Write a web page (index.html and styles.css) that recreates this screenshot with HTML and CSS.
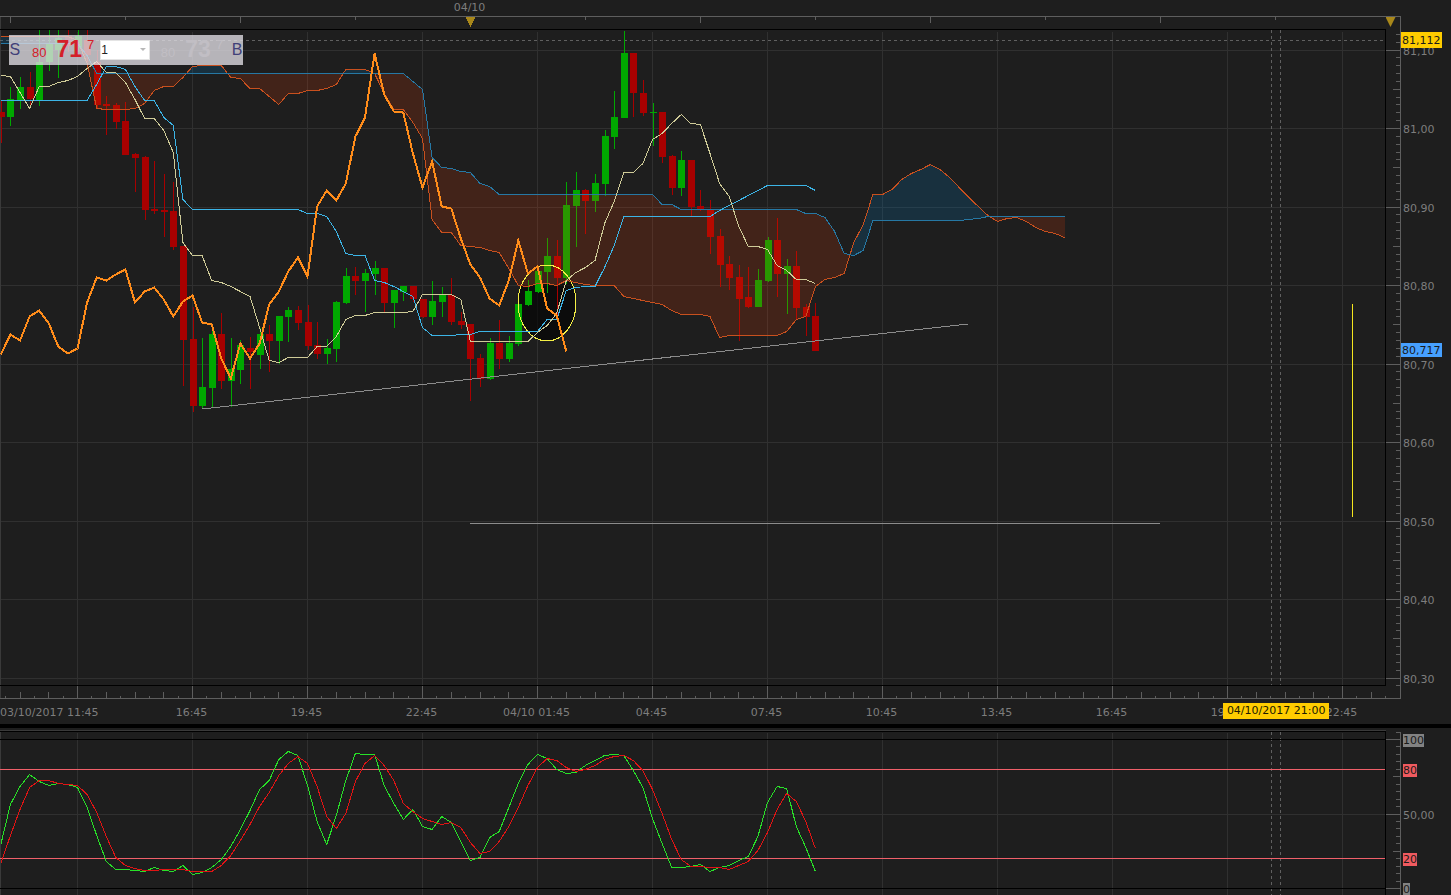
FILE: index.html
```
<!DOCTYPE html>
<html lang="en">
<head>
  <meta charset="UTF-8">
  <meta name="viewport" content="width=device-width, initial-scale=1.0">
  <title>Chart</title>
  <link rel="stylesheet" href="styles.css">
</head>
<body>
  <main class="terminal">
    <div class="date-row"><span class="date-label">04/10</span></div>

    <section class="pane price-pane">
      <svg id="price-plot" class="plot" viewBox="0 16 1386 683" preserveAspectRatio="none" role="img" aria-label="Price chart"></svg>
      <svg id="price-axis" class="axis" viewBox="1386 16 65 683" preserveAspectRatio="none"></svg>

      <form class="deal-box">
        <button type="button" class="side">S</button>
        <span class="quote sell"><small>80</small><b>71</b><sup>7</sup></span>
        <select class="amount" aria-label="Amount">
          <option>1</option>
        </select>
        <svg class="arrow" viewBox="0 0 6 4"><path d="M0 0h6L3 3z"/></svg>
        <span class="quote buy"><small>80</small><b>73</b><sup>7</sup></span>
        <button type="button" class="side">B</button>
      </form>
    </section>

    <div class="time-row">
      <span class="first">03/10/2017 11:45</span>
      <span>16:45</span>
      <span>19:45</span>
      <span>22:45</span>
      <span>04/10 01:45</span>
      <span>04:45</span>
      <span>07:45</span>
      <span>10:45</span>
      <span>13:45</span>
      <span>16:45</span>
      <span>19:45</span>
      <span>22:45</span>
      <span class="time-flag">04/10/2017 21:00</span>
    </div>

    <div class="splitter"></div>

    <section class="pane">
      <svg id="osc-plot" class="plot" viewBox="0 728 1386 167" preserveAspectRatio="none" role="img" aria-label="Stochastic oscillator"></svg>
      <svg id="osc-axis" class="axis" viewBox="1386 728 65 167" preserveAspectRatio="none"></svg>
    </section>
  </main>
  <script src="chart.js"></script>
</body>
</html>
```

FILE: styles.css
```
* {
  box-sizing: border-box;
}

body {
  margin: 0;
  background: #1e1e1e;
  color: #7d7d7d;
  font-family: "DejaVu Sans", Verdana, sans-serif;
  font-size: 11px;
  overflow: hidden;
}

.terminal {
  display: grid;
  grid-template-rows: 16px 683fr 25px 4px 167fr;
  height: 100vh;
}

.date-row {
  display: grid;
  grid-template-columns: 412fr 115fr 924fr;
  line-height: 15px;
}

.date-label {
  grid-column: 2;
  text-align: center;
}

.pane {
  position: relative;
  display: grid;
  grid-template-columns: 1fr 65px;
  min-height: 0;
}

.plot,
.axis {
  display: block;
  width: 100%;
  height: 100%;
  min-height: 0;
}

.time-row {
  position: relative;
  display: grid;
  grid-template-columns: 134fr repeat(11, 115fr) 52fr;
  line-height: 28px;
  text-align: center;
  white-space: nowrap;
}

.time-row .first {
  text-align: left;
}

.time-flag {
  position: absolute;
  left: 84.3%;
  top: 4px;
  width: 106px;
  background: #ffcc00;
  color: #201a00;
  line-height: 16px;
}

.splitter {
  background: #000;
}

/* chart drawing */
.plot path,
.plot line,
.axis line {
  fill: none;
  shape-rendering: crispEdges;
}

.plot rect,
.axis rect {
  shape-rendering: crispEdges;
}

.grid { stroke: #303030; }
.frame { stroke: #000; }
.edge { stroke: #5e5e5e; }
.edge-soft { stroke: #3a3a3a; }
.cross { stroke: #606060; stroke-dasharray: 3 3; }
.level { stroke: #f0606a; }
.trend { stroke: #8c8c8c; }
.mark { stroke: #f5e61e; }
.up { fill: #00a800; stroke: none; }
.down { fill: #a80000; stroke: none; }
.tenkan { stroke: #cfcb98; }
.kijun { stroke: #3cb4e6; }
.senkou-a { stroke: #c8501e; }
.senkou-b { stroke: #2678a4; }
.chikou { stroke: #ff8c1a; stroke-width: 2; }
.fast { stroke: #28e028; }
.slow { stroke: #e01414; }
.plot .cloud-down { fill: #ff3c00; fill-opacity: 0.16; }
.plot .cloud-up { fill: #0078be; fill-opacity: 0.2; }
.plot .ring-fill { fill: #000; fill-opacity: 0.6; }
.ring { fill: none; stroke: #f5f046; shape-rendering: crispEdges; }
.plot .pointer,
.axis .pointer { fill: #a8871a; }

.axis text { fill: #7d7d7d; }
.axis .dark { fill: #1a1a1a; }
.bg-yellow { fill: #ffcc00; }
.bg-blue { fill: #46a0ff; }
.bg-grey { fill: #828282; }
.bg-red { fill: #f05a5f; }

/* one click dealing box */
.deal-box {
  position: absolute;
  left: 9px;
  top: 19px;
  display: flex;
  align-items: center;
  width: 234px;
  height: 30px;
  background: rgba(226, 223, 230, 0.78);
  font-family: "Liberation Sans", Arial, sans-serif;
}

.side {
  width: 12px;
  padding: 0;
  border: 0;
  background: none;
  color: #404078;
  font: 16px "Liberation Sans", Arial, sans-serif;
}

.quote {
  display: flex;
  align-items: baseline;
  justify-content: flex-end;
  width: 74px;
  padding-top: 2px;
  line-height: 20px;
}

.quote small { font-size: 13px; margin-right: 10px; }
.quote b { font-size: 23px; }
.quote sup { font-size: 13px; line-height: 12px; margin-left: 5px; align-self: flex-start; }
.sell { color: #d42028; }
.buy { color: #c1bec4; margin-right: 8px; }

.amount {
  appearance: none;
  width: 50px;
  height: 20px;
  margin-left: 6px;
  padding: 0;
  border: 1px solid #e4e4e4;
  border-radius: 0;
  background: #fff;
  color: #222;
  font: 12px "Liberation Sans", Arial, sans-serif;
}

.arrow {
  width: 6px;
  height: 4px;
  margin: 0 4px 0 -10px;
  fill: #b8b8b8;
}
```

FILE: chart.js
```
const NS = 'http://www.w3.org/2000/svg';
const STEP = 115 / 12;
const FIRST = -8;

const pricePlot = document.getElementById('price-plot');
const priceAxis = document.getElementById('price-axis');
const oscPlot = document.getElementById('osc-plot');
const oscAxis = document.getElementById('osc-axis');

// [high, body top, body bottom, low, up]
const candles = [
  [100,112,117,143,0],[87,99,117,126,1],[77,87,100,109,1],[72,87,99,107,0],[30,62,100,106,1],
  [30,44,62,71,1],[30,38,50,78,1],[30,36,46,52,0],[30,36,48,52,1],[30,40,55,62,0],
  [50,62,105,108,0],[96,104,106,135,0],[103,105,122,129,0],[102,121,155,155,0],[153,154,158,192,0],
  [156,157,210,220,0],[161,209,211,214,0],[174,210,212,237,0],[182,211,247,250,0],[246,246,340,386,0],
  [307,339,406,412,0],[338,387,406,408,1],[326,334,388,408,1],[313,334,381,389,0],[338,369,381,407,1],
  [340,345,370,384,1],[337,348,352,389,0],[328,334,355,369,1],[325,334,341,372,0],[316,316,341,364,1],
  [307,310,317,342,1],[306,310,323,330,0],[305,322,346,350,0],[322,345,354,359,0],[339,348,354,364,1],
  [301,302,349,362,1],[268,276,303,304,1],[267,276,281,295,0],[269,273,281,312,1],[261,268,274,295,1],
  [268,268,303,312,0],[290,290,303,328,1],[286,286,292,301,1],[286,286,299,302,0],[299,299,317,318,0],
  [281,301,317,325,1],[287,295,302,317,1],[278,295,322,325,0],[312,321,325,329,0],[324,324,359,401,0],
  [354,358,379,387,0],[338,343,379,380,1],[320,343,359,369,0],[336,343,359,362,1],[298,304,344,346,1],
  [280,291,305,306,1],[266,271,292,293,1],[238,256,272,293,1],[240,256,278,315,0],[182,205,278,284,1],
  [172,190,206,247,1],[189,190,201,234,0],[174,183,201,212,1],[130,136,184,196,1],[91,117,137,149,1],
  [31,53,118,118,1],[53,53,93,117,0],[80,93,113,116,0],[103,112,113,146,1],[112,112,157,163,0],
  [155,156,188,195,0],[151,160,188,196,1],[160,160,207,216,0],[190,206,209,211,0],[200,209,237,254,0],
  [229,236,265,287,0],[256,264,278,290,0],[265,277,299,341,0],[267,297,307,308,0],[269,280,307,307,1],
  [237,240,281,282,1],[218,240,274,297,0],[259,266,274,314,1],[251,266,308,319,0],[304,307,317,336,0],
  [303,316,351,351,0]
];

const flat = (y, n) => Array(n).fill(y);

const tenkan = [75,76,92,108,86,86,82,80,76,68,61,72,72,82,99,118,118,130,152,242,255,255,280,282,286,
  291,296,327,360,362,357,357,357,346,346,336,319,315,315,312,312,312,312,311,294,294,294,294,299,
  ...flat(341, 7),332,325,313,280,272,267,260,223,201,172,172,163,139,133,123,114,123,124,153,183,196,
  226,246,246,249,265,270,279,279,283];

const kijun = [...flat(100, 10),84,66,66,69,86,100,100,117,125,199,...flat(209, 12),213,213,216,231,253,
  255,255,280,282,286,291,296,327,335,335,335,334,334,...flat(331, 7),319,319,290,287,286,286,267,245,
  ...flat(216, 10),210,205,200,195,190,...flat(185, 5),190];

const senkouA = [...flat(36, 8),40,63,108,109,109,109,108,103,90,86,86,77,66,65,65,65,77,78,88,88,96,104,
  93,93,90,90,88,84,69,69,69,73,93,109,109,122,138,219,232,232,245,246,247,250,252,268,285,286,283,283,
  285,280,282,284,285,285,285,296,298,300,302,304,310,314,314,314,316,337,...flat(335, 6),331,319,316,
  286,279,277,273,242,224,194,194,189,179,173,169,164,169,177,187,197,206,215,221,218,217,221,227,231,
  233,237];

const senkouB = [...flat(43, 8),43,55,...flat(73, 33),81,89,157,167,168,171,172,183,186,...flat(194, 17),
  204,204,...flat(209, 13),213,213,217,231,253,255,250,...flat(220, 10),219,218,...flat(216, 9)];

const chikou = [354,334,340,316,310,323,346,353,348,302,277,280,274,269,302,291,287,299,316,301,295,322,
  324,358,378,343,358,343,304,291,271,257,276,206,190,200,183,136,117,53,94,111,112,153,187,161,206,
  208,238,264,277,298,305,280,240,273,266,308,315,351];

const fast = [844,804,786,774,781,785,783,784,787,807,835,861,869,869,870,871,867,870,871,865,874,872,
  867,859,846,829,810,789,780,759,751,755,785,821,844,815,780,753,754,754,785,803,819,809,826,829,816,
  822,841,860,857,837,831,807,783,764,754,758,769,773,772,765,760,755,754,755,770,787,818,843,867,867,
  866,864,871,867,865,860,856,836,802,786,788,826,847,871];

const slow = [863,835,809,787,780,780,783,784,785,794,812,836,857,865,868,870,870,869,869,869,871,871,
  871,865,855,840,824,806,792,775,763,756,763,786,816,828,813,781,763,755,765,780,803,811,818,821,824,
  822,827,842,853,851,841,826,807,785,767,758,760,767,771,769,765,759,756,755,760,770,789,813,839,859,
  866,866,867,867,869,865,861,850,832,809,793,801,821,848];

function add(parent, tag, cls, attrs) {
  const el = document.createElementNS(NS, tag);
  el.setAttribute('class', cls);
  for (const key in attrs) el.setAttribute(key, attrs[key]);
  parent.appendChild(el);
  return el;
}

function line(parent, cls, x1, y1, x2, y2) {
  add(parent, 'line', cls, { x1, y1, x2, y2 });
}

function barX(n) {
  return 77.5 + (n + FIRST) * STEP;
}

function series(parent, cls, values) {
  const d = values.map((y, n) => (n ? 'L' : 'M') + barX(n).toFixed(1) + ' ' + (y + 0.5)).join('');
  add(parent, 'path', cls, { d });
}

// area between the two spans, split where they cross
function cloud() {
  let down = '';
  let up = '';
  const put = (x1, a1, b1, x2, a2, b2) => {
    const d = `M${x1} ${a1}L${x2} ${a2}L${x2} ${b2}L${x1} ${b1}Z`;
    if (a1 + a2 > b1 + b2) down += d; else up += d;
  };
  for (let n = 0; n < senkouA.length - 1; n++) {
    const x1 = barX(n), x2 = barX(n + 1);
    const a1 = senkouA[n], a2 = senkouA[n + 1];
    const b1 = senkouB[n], b2 = senkouB[n + 1];
    if ((a1 - b1) * (a2 - b2) < 0) {
      const t = (a1 - b1) / (a1 - b1 - a2 + b2);
      const x = x1 + t * (x2 - x1);
      const y = a1 + t * (a2 - a1);
      put(x1, a1, b1, x, y, y);
      put(x, y, y, x2, a2, b2);
    } else {
      put(x1, a1, b1, x2, a2, b2);
    }
  }
  add(pricePlot, 'path', 'cloud-down', { d: down });
  add(pricePlot, 'path', 'cloud-up', { d: up });
}

function pointer(parent, x) {
  add(parent, 'path', 'pointer', { d: `M${x - 5} 17h10l-5 10z` });
}

function label(parent, x, baseline, text, cls) {
  add(parent, 'text', cls || '', { x, y: baseline }).textContent = text;
}

function drawPrice() {
  for (let x = 77.5; x < 1386; x += 115) line(pricePlot, 'grid', x, 32, x, 685);
  for (let n = 0; n < 9; n++) {
    const y = Math.floor(50 + n * 78.5) + 0.5;
    line(pricePlot, 'grid', 0, y, 1386, y);
  }
  line(pricePlot, 'edge-soft', 0.5, 16, 0.5, 698);
  line(pricePlot, 'cross', 0, 40.5, 1386, 40.5);
  line(pricePlot, 'cross', 1271.5, 30, 1271.5, 685);
  line(pricePlot, 'cross', 1280.5, 30, 1280.5, 685);

  // lower part of the ring is shaded, the cloud covers the rest
  add(pricePlot, 'path', 'ring-fill', { d: 'M522 285L547 284L557 286L571 281A29 38 0 1 1 522 285Z' });

  candles.forEach(([high, top, bottom, low, up], n) => {
    const x = Math.round(barX(n));
    const cls = up ? 'up' : 'down';
    add(pricePlot, 'rect', cls, { x, y: high, width: 1, height: low - high });
    add(pricePlot, 'rect', cls, { x: x - 3, y: top, width: 7, height: bottom - top });
  });

  cloud();
  add(pricePlot, 'ellipse', 'ring', { cx: 547, cy: 303, rx: 29, ry: 38 });
  series(pricePlot, 'senkou-a', senkouA);
  series(pricePlot, 'senkou-b', senkouB);
  series(pricePlot, 'kijun', kijun);
  series(pricePlot, 'tenkan', tenkan);
  series(pricePlot, 'chikou', chikou);

  line(pricePlot, 'trend', 202, 409, 968, 324);
  line(pricePlot, 'trend', 470, 523.5, 1160, 523.5);
  line(pricePlot, 'mark', 1352.5, 304, 1352.5, 517);

  line(pricePlot, 'frame', 0, 29.5, 1386, 29.5);
  line(pricePlot, 'frame', 0, 685.5, 1386, 685.5);
  line(pricePlot, 'frame', 1385.5, 29, 1385.5, 686);

  // top and bottom scales
  line(pricePlot, 'edge', 0, 16.5, 1386, 16.5);
  line(pricePlot, 'edge', 0, 698.5, 1386, 698.5);
  for (let n = 0; n < 12; n++) {
    const x = 10.5 + n * 115;
    line(pricePlot, 'edge', x, 17, x, n % 2 ? 20 : 23);
  }
  for (let k = -5; k < 92; k++) {
    const x = Math.floor(77.5 + k * 14.375) + 0.5;
    const y = k % 8 === 0 ? 686 : k % 2 === 0 ? 692 : 696;
    line(pricePlot, 'edge', x, y, x, 698);
  }
  pointer(pricePlot, 470.5);
}

function drawPriceAxis() {
  line(priceAxis, 'edge', 1386, 16.5, 1401, 16.5);
  line(priceAxis, 'edge', 1386, 698.5, 1401, 698.5);
  line(priceAxis, 'edge', 1400.5, 16, 1400.5, 699);
  for (let k = -2; k < 82; k++) {
    const y = Math.floor(50 + k * 7.85) + 0.5;
    const x = k % 10 === 0 ? 1386 : k % 5 === 0 ? 1393 : 1396;
    line(priceAxis, 'edge', x, y, 1400, y);
  }
  ['81,10', '81,00', '80,90', '80,80', '80,70', '80,60', '80,50', '80,40', '80,30'].forEach((text, n) => {
    label(priceAxis, 1403, Math.floor(55 + n * 78.5), text);
  });
  add(priceAxis, 'rect', 'bg-yellow', { x: 1401, y: 32, width: 41, height: 16 });
  label(priceAxis, 1402, 44, '81,112', 'dark');
  add(priceAxis, 'rect', 'bg-blue', { x: 1401, y: 343, width: 41, height: 14 });
  label(priceAxis, 1402, 354, '80,717', 'dark');
  pointer(priceAxis, 1390.5);
}

function drawOscillator() {
  for (let x = 77.5; x < 1386; x += 115) line(oscPlot, 'grid', x, 733, x, 895);
  line(oscPlot, 'edge-soft', 0.5, 731, 0.5, 895);
  line(oscPlot, 'grid', 0, 814.5, 1386, 814.5);
  line(oscPlot, 'cross', 1271.5, 732, 1271.5, 895);
  line(oscPlot, 'cross', 1280.5, 732, 1280.5, 895);
  line(oscPlot, 'edge-soft', 0, 730.5, 1386, 730.5);
  line(oscPlot, 'frame', 0, 731.5, 1386, 731.5);
  line(oscPlot, 'frame', 0, 739.5, 1386, 739.5);
  line(oscPlot, 'frame', 0, 888.5, 1386, 888.5);
  line(oscPlot, 'frame', 1385.5, 731, 1385.5, 895);
  line(oscPlot, 'level', 0, 769.5, 1385, 769.5);
  line(oscPlot, 'level', 0, 858.5, 1385, 858.5);
  series(oscPlot, 'fast', fast);
  series(oscPlot, 'slow', slow);
}

function drawOscillatorAxis() {
  line(oscAxis, 'edge', 1400.5, 732, 1400.5, 895);
  for (let k = -1; k < 21; k++) {
    const y = Math.floor(739.5 + k * 7.45) + 0.5;
    const x = k % 10 === 0 ? 1386 : k % 5 === 0 ? 1393 : 1396;
    line(oscAxis, 'edge', x, y, 1400, y);
  }
  add(oscAxis, 'rect', 'bg-grey', { x: 1403, y: 734, width: 21, height: 13 });
  label(oscAxis, 1403, 744, '100', 'dark');
  add(oscAxis, 'rect', 'bg-red', { x: 1403, y: 764, width: 14, height: 13 });
  label(oscAxis, 1403, 774, '80', 'dark');
  label(oscAxis, 1403, 819, '50,00');
  add(oscAxis, 'rect', 'bg-red', { x: 1403, y: 853, width: 14, height: 13 });
  label(oscAxis, 1403, 863, '20', 'dark');
  add(oscAxis, 'rect', 'bg-grey', { x: 1403, y: 883, width: 7, height: 12 });
  label(oscAxis, 1403, 893, '0', 'dark');
}

drawPrice();
drawPriceAxis();
drawOscillator();
drawOscillatorAxis();
```
